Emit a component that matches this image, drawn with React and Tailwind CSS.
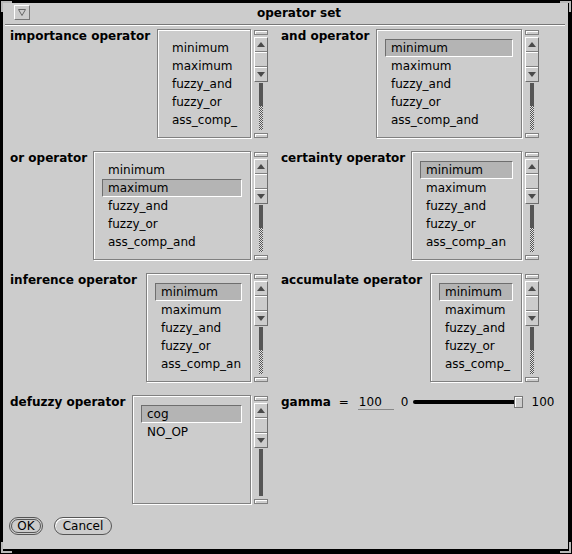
import React from "react";

const Arrow = ({ down }) => (
  <svg width="8" height="5" viewBox="0 0 8 5">
    <path d={down ? "M0 0H8L4 5Z" : "M0 5H8L4 0Z"} fill="#4a4a4a" />
  </svg>
);

const Cap = () => (
  <div className="w-[14px] h-[5px] shrink-0 border border-[#808080] shadow-[inset_1px_1px_0_#fff]" />
);

const ScrollBar = ({ full }) => (
  <div className="w-[14px] h-[109px] shrink-0 flex flex-col items-center pt-[1px]">
    <Cap />
    <div className="mt-[2px] w-[14px] h-[45px] shrink-0 flex flex-col border border-t-white border-l-white border-b-[#6e6e6e] border-r-[#6e6e6e]">
      <div className="h-[14px] flex items-center justify-center border-b border-[#808080]">
        <Arrow />
      </div>
      <div className="flex-1 border-b border-[#808080] shadow-[inset_0_1px_0_#fff]" />
      <div className="h-[14px] flex items-center justify-center shadow-[inset_0_1px_0_#fff]">
        <Arrow down />
      </div>
    </div>
    <div className="flex-1 w-[4px] flex flex-col mt-[1px] mb-[3px]">
      <div className={full ? "flex-1 bg-[#555]" : "h-[23px] bg-[#555]"} />
      {!full && (
        <div className="flex-1 bg-[repeating-conic-gradient(#555_0_25%,#e0e0e0_0_50%)] bg-[length:2px_2px]" />
      )}
    </div>
    <Cap />
  </div>
);

const ListBox = ({ width, items, selected }) => (
  <div
    className={`${width} h-[109px] shrink-0 border border-[#808080] shadow-[inset_1px_1px_0_#fff,1px_1px_0_#fff] pt-[9px] px-[8px] overflow-hidden`}
  >
    {items.map((item, i) => (
      <div
        key={item}
        className={`h-[18px] flex items-center pl-[5px] border whitespace-nowrap overflow-hidden text-[12px] ${
          i === selected
            ? "bg-[#b4b4b4] border-t-[#6e6e6e] border-l-[#6e6e6e] border-r-white border-b-white"
            : "border-transparent"
        }`}
      >
        {item}
      </div>
    ))}
  </div>
);

const ops = (last) => ["minimum", "maximum", "fuzzy_and", "fuzzy_or", last];

const Cell = ({ label, width, items, selected, full }) => (
  <div className="flex items-start">
    <span className="font-bold text-[12px] leading-[14px] whitespace-nowrap">
      {label}
    </span>
    <div className="ml-auto flex gap-[3px]">
      <ListBox width={width} items={items} selected={selected} />
      <ScrollBar full={full} />
    </div>
  </div>
);

const Corner = ({ className }) => (
  <div className={`absolute w-[11px] h-[11px] border-[#b8b8b8] ${className}`} />
);

export default function App() {
  return (
    <div className="relative w-[572px] h-[554px] bg-black pt-[3px] pl-[3px] pr-[4px] pb-[5px] font-['DejaVu_Sans',sans-serif] text-black">
      <div className="h-full bg-[#cccccc] flex flex-col">
        {/* Header */}
        <div className="h-[21px] flex items-start">
          <div className="ml-[11px] mt-[2px] w-[16px] h-[15px] flex items-center justify-center border border-t-white border-l-white border-b-[#777] border-r-[#777]">
            <svg width="8" height="7" viewBox="0 0 8 7">
              <path d="M0.5 0.5H7.5L4 6.5Z" fill="none" stroke="#666" />
            </svg>
          </div>
          <div className="flex-1 text-center pt-[3px] text-[12px] leading-[14px] font-bold">
            operator set
          </div>
        </div>
        <div className="ml-[2px] mr-[3px] h-[1px] bg-[#777]" />
        <div className="ml-[2px] mr-[3px] h-[1px] bg-white" />

        {/* Operators */}
        <div className="pt-[3px] pl-[7px] grid grid-cols-[258px_258px] gap-x-[13px] gap-y-[13px]">
          <Cell label="importance operator" width="w-[94px]" items={ops("ass_comp_")} />
          <Cell label="and operator" width="w-[146px]" items={ops("ass_comp_and")} selected={0} />
          <Cell label="or operator" width="w-[158px]" items={ops("ass_comp_and")} selected={1} />
          <Cell label="certainty operator" width="w-[111px]" items={ops("ass_comp_an")} selected={0} />
          <Cell label="inference operator" width="w-[105px]" items={ops("ass_comp_an")} selected={0} />
          <Cell label="accumulate operator" width="w-[92px]" items={ops("ass_comp_")} selected={0} />
          <Cell label="defuzzy operator" width="w-[119px]" items={["cog", "NO_OP"]} selected={0} full />

          {/* gamma */}
          <div className="flex items-start text-[12px] leading-[14px] whitespace-nowrap">
            <span className="shrink-0 font-bold">gamma</span>
            <span className="shrink-0 ml-[8px]">=</span>
            <span className="shrink-0 ml-[9px] w-[35px] h-[14px] pl-[1px] border-b border-[#888] box-content">100</span>
            <span className="shrink-0 ml-[7px]">0</span>
            <div className="shrink-0 ml-[4px] h-[14px] flex items-center">
              <div className="w-[101px] h-[4px] bg-black rounded-l-full" />
              <div className="w-[9px] h-[12px] border border-[#777] bg-[#cccccc] shadow-[inset_1px_1px_0_#fff]" />
            </div>
            <span className="shrink-0 ml-[9px]">100</span>
          </div>
        </div>

        {/* Buttons */}
        <div className="flex gap-[11px] pl-[6px] mt-[13px]">
          <button className="w-[34px] h-[18px] rounded-full border border-[#555] p-[1px] flex">
            <span className="flex-1 rounded-full border border-[#555] flex items-center justify-center text-[12px] leading-none">
              OK
            </span>
          </button>
          <button className="w-[58px] h-[18px] rounded-full border border-[#555] shadow-[inset_1px_1px_0_#fff] flex items-center justify-center text-[12px] leading-none">
            Cancel
          </button>
        </div>
      </div>

      <Corner className="top-[1px] left-[1px] border-t-2 border-l-2" />
      <Corner className="top-[1px] right-[1px] border-t-2 border-r-2" />
      <Corner className="bottom-[1px] left-[1px] border-b-2 border-l-2" />
      <Corner className="bottom-[1px] right-[1px] border-b-2 border-r-2" />
    </div>
  );
}
